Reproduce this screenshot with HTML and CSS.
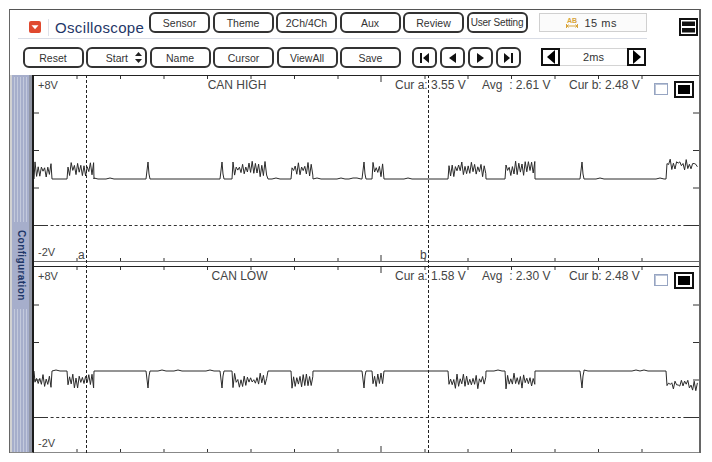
FILE: index.html
```html
<!DOCTYPE html>
<html lang="en">
<head>
    <meta charset="UTF-8">
    <title>Oscilloscope</title>
    <link rel="stylesheet" href="styles.css">
</head>
<body>
    <div class="frame">
        <div class="row-top">
            <svg class="drop-icon" width="12" height="12" viewBox="0 0 12 12">
                <rect width="12" height="12" rx="2" fill="#e0492f"/>
                <path d="M2.5 4.2h7L6 8.2z" fill="#fff"/>
            </svg>
            <div class="app-title">Oscilloscope</div>
            <div class="btn-group">
                <button class="btn">Sensor</button>
                <button class="btn">Theme</button>
                <button class="btn">2Ch/4Ch</button>
                <button class="btn">Aux</button>
                <button class="btn">Review</button>
                <button class="btn btn-narrow">User Setting</button>
            </div>
            <div class="readout">
                <svg width="12" height="13" viewBox="0 0 12 13">
                    <text x="6" y="6.5" text-anchor="middle" class="readout-ab">AB</text>
                    <path d="M0.5 10h11M0.5 8v4M11.5 8v4M2.5 8.5L1 10l1.5 1.5M9.5 8.5L11 10l-1.5 1.5" fill="none" stroke="#d8a53c" stroke-width="1"/>
                </svg>
                <span class="readout-val">15 ms</span>
            </div>
            <svg class="layout-icon" width="19" height="18" viewBox="0 0 19 18">
                <rect x="1" y="1" width="17" height="16" fill="#fff" stroke="#111" stroke-width="2"/>
                <rect x="3" y="3.5" width="13" height="4.5" fill="#111"/>
                <rect x="3" y="10" width="13" height="4.5" fill="#111"/>
            </svg>
        </div>
        <div class="top-rule"></div>
        <div class="row-controls">
            <div class="btn-group">
                <button class="btn">Reset</button>
                <button class="btn btn-start">Start
                    <svg width="7" height="11" viewBox="0 0 7 11"><path d="M3.5 0L7 4H0zM3.5 11L0 7h7z" fill="#222"/></svg>
                </button>
                <button class="btn">Name</button>
                <button class="btn">Cursor</button>
                <button class="btn">ViewAll</button>
                <button class="btn">Save</button>
            </div>
            <div class="nav-group">
                <button class="btn btn-nav"><svg width="11" height="10" viewBox="0 0 11 10"><path d="M1 0h2v10H1zM10 0v10L4 5z" fill="#111"/></svg></button>
                <button class="btn btn-nav"><svg width="9" height="10" viewBox="0 0 9 10"><path d="M8 0v10L1 5z" fill="#111"/></svg></button>
                <button class="btn btn-nav"><svg width="9" height="10" viewBox="0 0 9 10"><path d="M1 0v10l7-5z" fill="#111"/></svg></button>
                <button class="btn btn-nav"><svg width="11" height="10" viewBox="0 0 11 10"><path d="M1 0v10l6-5zM8 0h2v10H8z" fill="#111"/></svg></button>
            </div>
            <div class="step-group">
                <div class="step-arrow"><svg width="10" height="14" viewBox="0 0 10 14"><path d="M9 0v14L1 7z" fill="#000"/></svg></div>
                <div class="step-val">2ms</div>
                <div class="step-arrow"><svg width="10" height="14" viewBox="0 0 10 14"><path d="M1 0v14l8-7z" fill="#000"/></svg></div>
            </div>
        </div>
        <div class="scope">
            <div class="sidebar">
                <div class="grip grip-top"></div>
                <div class="sidebar-label">Configuration</div>
                <div class="grip"></div>
            </div>
            <div class="panels">
                <div class="panel" id="panelHigh">
                    <svg class="trace" data-base="179" data-dir="-1" viewBox="34 76 665 185"></svg>
                    <div class="readings">
                        <span class="r-range">+8V</span>
                        <span class="r-title">CAN HIGH</span>
                        <span class="r-val">Cur a: 3.55 V</span>
                        <span class="r-val">Avg  : 2.61 V</span>
                        <span class="r-val r-last">Cur b: 2.48 V</span>
                        <span class="check-box"></span>
                        <span class="solid-box"></span>
                    </div>
                    <span class="range-low">-2V</span>
                    <span class="cursor-name cursor-name-a">a</span>
                    <span class="cursor-name cursor-name-b">b</span>
                </div>
                <div class="panel" id="panelLow">
                    <svg class="trace" data-base="371" data-dir="1" viewBox="34 267 665 185"></svg>
                    <div class="readings">
                        <span class="r-range">+8V</span>
                        <span class="r-title r-title-low">CAN LOW</span>
                        <span class="r-val">Cur a: 1.58 V</span>
                        <span class="r-val">Avg  : 2.30 V</span>
                        <span class="r-val r-last">Cur b: 2.48 V</span>
                        <span class="check-box"></span>
                        <span class="solid-box"></span>
                    </div>
                    <span class="range-low">-2V</span>
                </div>
                <div class="cursor cursor-a"></div>
                <div class="cursor cursor-b"></div>
            </div>
        </div>
    </div>
    <script src="script.js"></script>
</body>
</html>
```

FILE: styles.css
```css
html, body {
    margin: 0;
    padding: 0;
    background: #fff;
    overflow: hidden;
}
body {
    font-family: "Liberation Sans", Arial, sans-serif;
    color: #333;
}
.frame {
    box-sizing: border-box;
    width: 692px;
    height: 444px;
    margin: 9px 0 0 9px;
    border-top: 1px solid #555;
    border-left: 1px solid #666;
    border-right: 2px solid #666;
}
.row-top {
    display: flex;
    align-items: flex-start;
    padding: 2px 0 0 19px;
}
.drop-icon {
    margin-top: 9px;
    flex: none;
}
.app-title {
    box-sizing: border-box;
    flex: none;
    width: 101px;
    height: 17px;
    margin: 7px 0 0 7px;
    padding-left: 6px;
    border-left: 1px solid #dfe2ea;
    font-size: 15px;
    line-height: 17px;
    letter-spacing: 0.35px;
    color: #1f3768;
}
.btn-group {
    display: flex;
    gap: 2.5px;
    flex: none;
}
.btn {
    box-sizing: border-box;
    width: 61px;
    height: 21px;
    padding: 0;
    border: 2px solid #333;
    border-radius: 6px;
    background: #fff;
    color: #333;
    font-family: inherit;
    font-size: 10.5px;
    line-height: 16px;
}
.btn-narrow {
    font-size: 10px;
    letter-spacing: -0.2px;
}
.btn-start {
    display: flex;
    align-items: center;
    justify-content: flex-end;
    gap: 7px;
    padding-right: 3px;
}
.readout {
    box-sizing: border-box;
    flex: none;
    display: flex;
    align-items: center;
    gap: 7px;
    width: 108px;
    height: 19px;
    margin: 1px 0 0 11px;
    padding-left: 26px;
    border: 1px solid #d0d0d0;
    background: #fbfbfb;
    font-size: 11px;
}
.readout-ab {
    font-size: 7px;
    font-weight: bold;
    fill: #d8a53c;
}
.readout-val {
    letter-spacing: 0.5px;
}
.layout-icon {
    flex: none;
    margin: 6px 0 0 32px;
}
.top-rule {
    width: 629px;
    height: 1px;
    margin: 2px 0 0 8px;
    background: #d9dde6;
}
.row-controls {
    display: flex;
    align-items: flex-start;
    margin-top: 8px;
    padding-left: 12.5px;
}
.nav-group {
    display: flex;
    gap: 3px;
    margin-left: 11px;
}
.btn-nav {
    display: flex;
    align-items: center;
    justify-content: center;
    width: 25px;
}
.step-group {
    display: flex;
    margin: 1px 0 0 20px;
}
.step-arrow {
    box-sizing: border-box;
    display: flex;
    align-items: center;
    justify-content: center;
    width: 19px;
    height: 18px;
    border: 2px solid #111;
    background: #fff;
}
.step-val {
    box-sizing: border-box;
    width: 67px;
    height: 18px;
    border: 1px solid #d4d4d4;
    border-width: 1px 0;
    font-size: 11px;
    line-height: 16px;
    text-align: center;
}
.scope {
    display: flex;
    height: 378px;
    margin-top: 7px;
}
.sidebar {
    box-sizing: border-box;
    flex: none;
    display: flex;
    flex-direction: column;
    width: 24px;
    padding-top: 2px;
    border-right: 2px solid #1c1c1c;
    border-bottom: 1px solid #888;
    background: linear-gradient(to right, #d2d2d2 0, #d2d2d2 2px, #a6aecb 2px, #a6aecb 19px, #8f94a3 19px, #8f94a3 22px);
}
.grip {
    flex: 1;
    margin: 0 4px 0 4px;
    background: repeating-linear-gradient(to right, #c3c9dc 0, #c3c9dc 1px, #a6aecb 1px, #a6aecb 3px);
}
.grip-top {
    flex: none;
    height: 145px;
}
.sidebar-label {
    display: flex;
    justify-content: flex-end;
    flex: none;
    padding: 8px 5px 8px 0;
    writing-mode: vertical-rl;
    font-size: 10px;
    font-weight: bold;
    line-height: 12px;
    letter-spacing: 0.4px;
    color: #1f3768;
    white-space: nowrap;
}
.panels {
    position: relative;
    flex: 1;
    display: flex;
    flex-direction: column;
    gap: 4px;
}
.panel {
    position: relative;
    box-sizing: border-box;
    height: 187px;
    border-top: 1px solid #222;
    border-bottom: 1px solid #666;
}
#panelLow {
    border-bottom-color: #888;
}
.trace {
    position: absolute;
    left: 0;
    top: 0;
    width: 665px;
    height: 185px;
}
.readings {
    position: absolute;
    left: 4px;
    top: 0;
    display: flex;
    align-items: flex-start;
    font-size: 12px;
    line-height: 18px;
    color: #444;
    white-space: pre;
}
.r-range {
    width: 96px;
    font-size: 11px;
}
.r-title {
    box-sizing: border-box;
    width: 206px;
    margin-right: 55px;
    text-align: center;
}
.r-title-low {
    padding-left: 5px;
}
.r-val {
    width: 87px;
}
.r-last {
    width: 85px;
}
.check-box {
    box-sizing: border-box;
    width: 14px;
    height: 12px;
    margin-top: 7px;
    border: 1px solid #97a5c2;
    box-shadow: inset 1px 1px 0 #bcc5d8;
    background: #fff;
}
.solid-box {
    box-sizing: border-box;
    width: 20px;
    height: 17px;
    margin: 5px 0 0 6px;
    border: 2px solid #111;
    padding: 2px;
    background: #000;
    background-clip: content-box;
}
.range-low {
    position: absolute;
    left: 4px;
    bottom: 1px;
    font-size: 11px;
    line-height: 16px;
    color: #444;
}
.cursor-name {
    position: absolute;
    bottom: -1px;
    font-size: 12px;
    line-height: 14px;
    color: #444;
}
.cursor-name-a {
    left: 44px;
}
.cursor-name-b {
    left: 386px;
}
.cursor {
    position: absolute;
    top: 0;
    bottom: 0;
    width: 0;
    border-left: 1px dashed #222;
}
.cursor-a {
    left: 52px;
}
.cursor-b {
    left: 394px;
}
```

FILE: script.js
```js
const SVG_NS = 'http://www.w3.org/2000/svg';

// burst positions along the time axis, in page pixels
const bursts = [
    [34, 52], [67, 94], [146, 150], [220, 224], [232, 268], [291, 313],
    [362, 366], [372, 384], [448, 486], [505, 535], [580, 584], [666, 698]
];
const xTicks = [77, 120.5, 164, 207.5, 251, 294.5, 338, 381, 425, 468, 511.5, 555, 598.5, 642];

let seed = 41;
function rnd() {
    seed = (seed * 1103 + 12345) % 65536;
    return seed / 65536;
}

function addLine(svg, x1, y1, x2, y2, cls) {
    const line = document.createElementNS(SVG_NS, 'line');
    line.setAttribute('x1', x1);
    line.setAttribute('y1', y1);
    line.setAttribute('x2', x2);
    line.setAttribute('y2', y2);
    line.setAttribute('stroke', '#333');
    if (cls) line.setAttribute('stroke-dasharray', cls);
    svg.appendChild(line);
}

function buildTrace(base, dir) {
    let pts = [];
    let x = 34;
    bursts.forEach(([from, to]) => {
        // flat part with a small bump now and then
        while (x < from) {
            pts.push(x + ',' + (rnd() < 0.12 ? base - 1 : base));
            x += 4;
        }
        x = from;
        pts.push(from + ',' + base);
        if (to - from <= 4) {
            pts.push((from + 2) + ',' + (base + dir * 17));
            pts.push((from + 3) + ',' + (base + dir * 5));
            pts.push(to + ',' + base);
        } else {
            const last = to === 698;
            let up = true;
            for (let px = from + 1; px < to; px += 1.6) {
                let depth = up ? 11 + rnd() * 7 : 2 + rnd() * 7;
                if (last) depth = (up ? 13 : 8) + rnd() * 7;
                if (last && dir < 0) depth += 1;
                pts.push(px.toFixed(1) + ',' + (base + dir * depth).toFixed(1));
                up = !up;
            }
            if (!last) pts.push(to + ',' + base);
        }
        x = to;
    });
    return pts.join(' ');
}

document.querySelectorAll('.trace').forEach(svg => {
    const base = Number(svg.dataset.base);
    const dir = Number(svg.dataset.dir);
    const box = svg.getAttribute('viewBox').split(' ').map(Number);
    const top = box[1], bottom = top + box[3];

    xTicks.forEach(tx => {
        const long = tx === 381 ? 6 : 3;
        addLine(svg, tx, top, tx, top + long);
        addLine(svg, tx, bottom - long, tx, bottom);
    });

    // voltage ticks and the dashed zero line
    const zero = base + 46.5;
    [zero - 112.5, zero - 75, zero - 37.5].forEach(ty => {
        addLine(svg, 34, ty, 39, ty);
        addLine(svg, 693, ty, 699, ty);
    });
    addLine(svg, 34, zero, 45, zero);
    addLine(svg, 45, zero, 685, zero, '3 2.6');
    addLine(svg, 685, zero, 699, zero);

    const trace = document.createElementNS(SVG_NS, 'polyline');
    trace.setAttribute('points', buildTrace(base, dir));
    trace.setAttribute('fill', 'none');
    trace.setAttribute('stroke', '#2a2a2a');
    trace.setAttribute('stroke-width', '1');
    svg.appendChild(trace);
});
```
